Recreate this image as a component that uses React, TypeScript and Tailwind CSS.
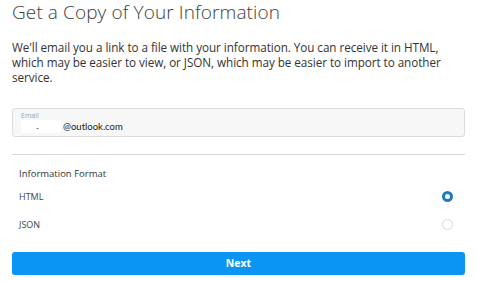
import React from 'react';

const App: React.FC = () => {
  const [format, setFormat] = React.useState<'html' | 'json'>('html');

  return (
    <div className="w-[477px] h-[281px] bg-white px-3 font-['Open_Sans',sans-serif] text-[#333]">
      <h1 className="text-[19px] font-light leading-[24px] text-[#3c3c3c] tracking-[0.1px]">Get a Copy of Your Information</h1>

      <p className="mt-[16px] text-[11.7px] leading-[15px] tracking-[-0.05px] text-[#333]">
        We'll email you a link to a file with your information. You can receive it in HTML, which may be easier to view, or JSON, which may be easier to import to another service.
      </p>

      <div className="mt-[23px] h-[29px] rounded-[3px] border border-[#dcdcdc] bg-[#f7f7f7] pl-[8px] pt-[2px]">
        <div className="text-[7px] leading-[9px] text-[#a0a0a0]">Email</div>
        <div className="flex items-center text-[9.5px] leading-[13px] text-[#222] font-['Lato',sans-serif]">
          <span className="relative mr-[2px] inline-block h-[13px] w-[40px] bg-white">
            <span className="absolute left-[15px] top-[4px] text-[8px] leading-none">-</span>
          </span>
          @outlook.com
        </div>
      </div>

      <div className="mt-[17px] h-px bg-[#d8d8d8]" />

      <div className="px-[7px]">
        <div className="mt-[12px] text-[9.5px] leading-[13px] text-[#333]">Information Format</div>

        <button onClick={() => setFormat('html')} className="mt-[10px] flex h-[13px] w-full items-center justify-between">
          <span className="text-[9px] text-[#444]">HTML</span>
          <span className={format === 'html' ? 'mr-[5px] h-[11px] w-[11px] rounded-full border-[3px] border-[#1d7abd]' : 'mr-[5px] h-[11px] w-[11px] rounded-full border border-[#d6d6d6]'} />
        </button>

        <button onClick={() => setFormat('json')} className="mt-[15px] flex h-[13px] w-full items-center justify-between">
          <span className="text-[9px] text-[#444]">JSON</span>
          <span className={format === 'json' ? 'mr-[5px] h-[11px] w-[11px] rounded-full border-[3px] border-[#1d7abd]' : 'mr-[5px] h-[11px] w-[11px] rounded-full border border-[#d6d6d6]'} />
        </button>
      </div>

      <button className="mt-[21px] h-[23px] w-full rounded-[3px] bg-[#0a95f5] text-[10.5px] font-bold text-white">Next</button>
    </div>
  );
};

export default App;
